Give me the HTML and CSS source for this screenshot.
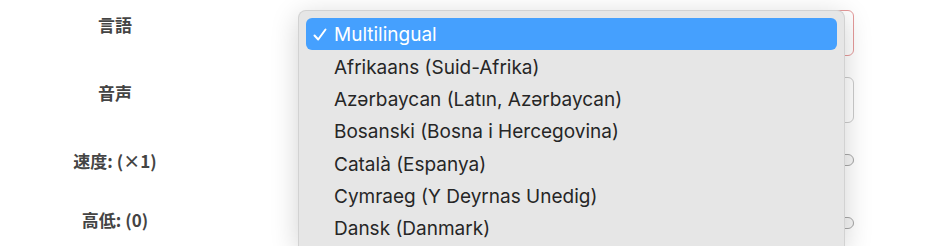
FILE: index.html
```html
<!DOCTYPE html>
<html lang="ja">
<head>
<meta charset="utf-8">
<link rel="stylesheet" href="styles.css">
</head>
<body>
<div class="page">
  <form class="settings">
    <div class="row row-select">
      <label class="label">言語</label>
      <div class="field"><div class="select error"></div></div>
    </div>
    <div class="row row-voice">
      <label class="label">音声</label>
      <div class="field"><div class="select"></div></div>
    </div>
    <div class="row row-rate">
      <label class="label">速度: (×1)</label>
      <div class="field"><div class="slider"><span class="thumb"></span></div></div>
    </div>
    <div class="row row-pitch">
      <label class="label">高低: (0)</label>
      <div class="field"><div class="slider"><span class="thumb"></span></div></div>
    </div>
  </form>
  <ul class="menu">
    <li class="item selected"><svg class="check" width="14" height="14" viewBox="0 0 14 14"><polyline points="1.5,7.5 5.2,11.5 12.5,1.5" fill="none" stroke="#ffffff" stroke-width="2" stroke-linecap="round" stroke-linejoin="round"/></svg>Multilingual</li>
    <li class="item">Afrikaans (Suid-Afrika)</li>
    <li class="item">Azərbaycan (Latın, Azərbaycan)</li>
    <li class="item">Bosanski (Bosna i Hercegovina)</li>
    <li class="item">Català (Espanya)</li>
    <li class="item">Cymraeg (Y Deyrnas Unedig)</li>
    <li class="item">Dansk (Danmark)</li>
  </ul>
</div>
</body>
</html>
```
FILE: styles.css
```css
html, body {
  margin: 0;
  padding: 0;
  background: #ffffff;
  width: 930px;
  height: 246px;
  overflow: hidden;
}
.page {
  position: relative;
  width: 930px;
  height: 246px;
  overflow: hidden;
}
.settings {
  display: flex;
  flex-direction: column;
  padding-top: 10px;
}
.row {
  display: flex;
  align-items: center;
  height: 46px;
}
.row-voice { margin-top: 21px; }
.row-rate { margin-top: 15px; }
.row-pitch { margin-top: 15px; }
.label {
  width: 230px;
  text-align: center;
  font-family: "Noto Sans CJK JP", "Liberation Sans", sans-serif;
  font-weight: 700;
  font-size: 17px;
  color: #444444;
}
.row-select .label { margin-top: -18px; }
.row-voice .label { margin-top: -16px; }
.row-rate .label { margin-top: -2px; }
.row-pitch .label { margin-top: -5px; }
.field {
  margin-left: 80px;
  width: 544px;
}
.select {
  height: 44px;
  border: 1px solid #cccccc;
  border-radius: 6px;
  background: #ffffff;
}
.select.error {
  border-color: #e59a9a;
}
.slider {
  position: relative;
  height: 4px;
  background: #d6d6d6;
  border-radius: 2px;
}
.row-pitch .slider { top: 2px; }
.thumb {
  position: absolute;
  right: 0;
  top: -5px;
  width: 18px;
  height: 10px;
  border: 1px solid #a8a8a8;
  border-radius: 6px;
  background: #f6f6f6;
}
.menu {
  position: absolute;
  left: 298px;
  top: 10px;
  width: 530px;
  height: 236px;
  margin: 0;
  padding: 7px 7px 0 7px;
  box-sizing: border-box;
  list-style: none;
  background: #e6e6e6;
  border: 1px solid #d2d2d2;
  border-bottom: none;
  border-radius: 8px 8px 0 0;
  box-shadow: 0 6px 28px rgba(0, 0, 0, 0.18);
  font-family: Inter, "Noto Sans", sans-serif;
  font-size: 19px;
  color: #262626;
  overflow: hidden;
}
.menu {
  width: 547px;
}
.item {
  height: 32.2px;
  line-height: 32.2px;
  padding-left: 28px;
  border-radius: 6px;
  white-space: nowrap;
  position: relative;
}
.item.selected {
  height: 32px;
  line-height: 33px;
  margin-bottom: 2px;
  background: #45a0fe;
  color: #ffffff;
}
.check {
  position: absolute;
  left: 7px;
  top: 10px;
}
```
